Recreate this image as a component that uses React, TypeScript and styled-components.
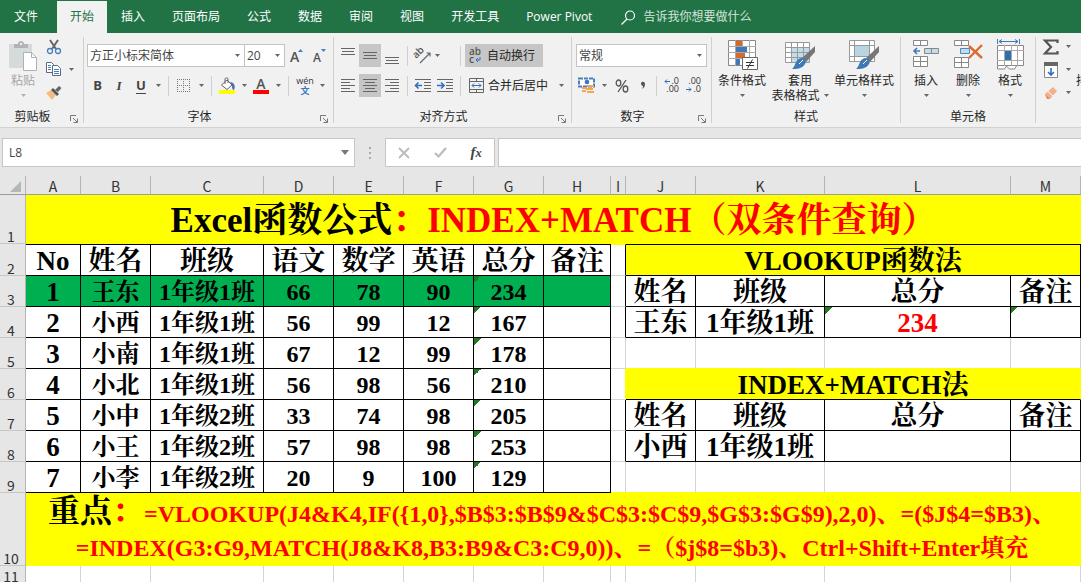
import React from "react";
import styled, { createGlobalStyle, css } from "styled-components";

const ui = `"Open Sans", "Noto Sans CJK SC", sans-serif`;
const uiCjk = `"Noto Sans CJK SC", sans-serif`;
const sheetFont = `"Liberation Serif", "Noto Serif CJK SC", "Noto Sans CJK SC", serif`;

const Global = createGlobalStyle`
  * { box-sizing: border-box; }
  html, body { margin: 0; background: #fff; }
  button, input, select { font: inherit; color: inherit; margin: 0; }
  svg { display: block; flex: none; overflow: visible; }
`;

const Window = styled.div`
  height: 100vh;
  overflow: hidden;
  display: flex;
  flex-direction: column;
  font: 12px/16px ${ui};
  color: #262626;
  background: #fff;
`;

/* ---------- tab strip ---------- */

const TabStrip = styled.nav`
  flex: none;
  display: flex;
  align-items: flex-end;
  gap: 1px;
  height: 33px;
  padding-left: 1px;
  background: #217346;
  overflow: hidden;
`;

const Tab = styled.button<{ $active?: boolean; $file?: boolean }>`
  flex: none;
  height: 32px;
  padding: 0 13px;
  border: 0;
  margin-right: ${(p) => (p.$file ? 5 : 0)}px;
  background: ${(p) => (p.$active ? "#f1f1f1" : "transparent")};
  color: ${(p) => (p.$active ? "#217346" : "#fff")};
  white-space: nowrap;
`;

const TellMe = styled.label`
  display: flex;
  align-items: center;
  gap: 7px;
  flex: 1;
  height: 32px;
  padding-left: 15px;
  color: #fff;

  input {
    flex: 1;
    min-width: 120px;
    padding: 0;
    border: 0;
    outline: 0;
    background: transparent;
  }
  input::placeholder { color: #d3e5da; opacity: 1; }
`;

/* ---------- ribbon ---------- */

const Ribbon = styled.div`
  flex: none;
  display: flex;
  height: 95px;
  padding: 2px 0;
  background: #f1f1f1;
  border-bottom: 1px solid #d2d2d2;
  overflow: hidden;
`;

const Group = styled.section<{ $w?: number }>`
  ${(p) => (p.$w ? css`flex: none; width: ${p.$w}px;` : css`flex: 1; min-width: 46px;`)}
  display: flex;
  flex-direction: column;
  padding-right: 1px;
  background: linear-gradient(#d0d0d0, #d0d0d0) right 2px / 1px 86px no-repeat;
  overflow: hidden;
  &:last-child { background: none; }
`;

const GroupBody = styled.div<{ $pad?: number }>`
  flex: 1;
  display: flex;
  padding-left: ${(p) => p.$pad ?? 3}px;
`;

const GroupFoot = styled.footer`
  display: flex;
  align-items: center;
  height: 17px;

  span { flex: 1; text-align: center; }
  button { padding: 4px 5px 0; border: 0; background: none; }
`;

const Rows = styled.div`
  display: flex;
  flex-direction: column;
  gap: 7px;
  padding-top: 9px;
`;

const Row = styled.div`
  display: flex;
  align-items: center;
  height: 23px;
`;

const Tool = styled.button<{ $w: number; $on?: boolean }>`
  flex: none;
  display: flex;
  align-items: center;
  justify-content: center;
  width: ${(p) => p.$w}px;
  height: 23px;
  padding: 0;
  border: 0;
  background: ${(p) => (p.$on ? "#c6c6c6" : "transparent")};
  color: #444;
`;

const TextTool = styled(Tool)`
  justify-content: flex-start;
  gap: 4px;
  padding-left: 4px;
  color: #262626;
  white-space: nowrap;
`;

const Glyph = styled.span<{ $size?: number; $italic?: boolean; $under?: boolean; $serif?: boolean }>`
  font: bold ${(p) => p.$size ?? 13}px/15px ${(p) => (p.$serif ? `"Liberation Serif", serif` : ui)};
  font-style: ${(p) => (p.$italic ? "italic" : "normal")};
  border-bottom: ${(p) => (p.$under ? "1px solid #444" : "0")};
`;

const Bar = styled.i<{ $before?: number }>`
  flex: none;
  width: 1px;
  height: 20px;
  margin: 0 4px 0 ${(p) => p.$before ?? 4}px;
  background: #d0d0d0;
`;

const Combo = styled.div<{ $w: number }>`
  position: relative;
  flex: none;
  width: ${(p) => p.$w}px;
  height: 23px;
  margin-right: -1px;
  border: 1px solid #c3c3c3;
  background: #fff;

  select {
    width: 100%;
    height: 21px;
    padding: 0 0 0 2px;
    border: 0;
    appearance: none;
    background: transparent;
    color: #444;
  }
  svg { position: absolute; right: 4px; top: 9px; pointer-events: none; }
`;

const Stack = styled.div`
  display: flex;
  flex-direction: column;
  width: 40px;
`;

const Big = styled.button<{ $w: number; $dim?: boolean }>`
  flex: none;
  display: flex;
  flex-direction: column;
  align-items: center;
  width: ${(p) => p.$w}px;
  padding: 5px 0 0;
  border: 0;
  background: none;
  color: ${(p) => (p.$dim ? "#a6a6a6" : "#262626")};
  line-height: 15px;
  white-space: nowrap;

  > svg:first-child { margin-bottom: 2px; }
  span { display: flex; align-items: center; justify-content: center; gap: 4px; min-height: 15px; }
`;

/* ---------- formula bar ---------- */

const FormulaBar = styled.div`
  flex: none;
  display: flex;
  align-items: center;
  height: 48px;
  padding: 10px 0 9px 2px;
  background: #e6e6e6;
`;

const NameBox = styled.div`
  position: relative;
  flex: none;
  width: 353px;
  height: 29px;
  border: 1px solid #c6c6c6;
  background: #fff;

  input { width: 100%; height: 27px; padding: 0 24px 0 6px; border: 0; outline: 0; background: none; color: #444; }
  button { position: absolute; right: 0; top: 0; width: 18px; height: 27px; padding: 0 5px; border: 0; background: none; }
`;

const Grip = styled.div`
  width: 30px;
  display: flex;
  justify-content: center;
`;

const EditButtons = styled.div`
  flex: none;
  display: flex;
  align-items: center;
  width: 110px;
  height: 29px;
  margin-right: 3px;
  border: 1px solid #c6c6c6;
  background: #fff;
`;

const FormulaInput = styled.input`
  flex: 1;
  min-width: 0;
  height: 29px;
  padding: 0 6px;
  border: 1px solid #c6c6c6;
  border-right: 0;
  outline: 0;
  background: #fff;
`;

/* ---------- worksheet ---------- */

const Sheet = styled.table`
  width: 100%;
  table-layout: fixed;
  border-collapse: separate;
  border-spacing: 0;
  font-family: ${sheetFont};
  color: #000;
`;

const ColHead = styled.th`
  height: 19px;
  padding: 3px 0 0;
  background: #e6e6e6;
  border-right: 1px solid #b4b4b4;
  border-bottom: 1px solid #9c9c9c;
  font: 400 14px/15px ${uiCjk};
  color: #333;
`;

const RowHead = styled.th<{ $h: number }>`
  height: ${(p) => p.$h}px;
  padding: 0 3px 0 0;
  vertical-align: bottom;
  background: #e6e6e6;
  border-right: 1px solid #b4b4b4;
  border-bottom: 1px solid #c6c6c6;
  font: 400 14px/14px ${uiCjk};
  color: #333;
`;

type Edge = "k" | "g" | "y";
const edge = { k: "#000", g: "#d4d4d4", y: "#ff0" };

const Cell = styled.td<{
  $size: number; $bg?: string; $r: Edge; $b: Edge; $t?: Edge; $red?: boolean; $flag?: boolean;
}>`
  padding: 2px 0 0;
  overflow: hidden;
  text-align: center;
  vertical-align: middle;
  white-space: nowrap;
  font-weight: bold;
  font-size: ${(p) => p.$size}px;
  line-height: 28px;
  color: ${(p) => (p.$red ? "#f00" : "#000")};
  background-color: ${(p) => p.$bg ?? "#fff"};
  border-right: 1px solid ${(p) => edge[p.$r]};
  border-bottom: 1px solid ${(p) => edge[p.$b]};
  ${(p) => p.$t && css`border-top: 1px solid ${edge[p.$t]};`}
  ${(p) => p.$flag && css`
    background-image: linear-gradient(135deg, #237a23 50%, transparent 50%);
    background-size: 7px 7px;
    background-repeat: no-repeat;
  `}
`;

const Banner = styled.td<{ $size: number; $line: number; $end?: number }>`
  padding: 2px ${(p) => p.$end ?? 0}px 0 0;
  text-align: center;
  vertical-align: middle;
  white-space: nowrap;
  background: #ff0;
  color: #f00;
  font-weight: bold;
  font-size: ${(p) => p.$size}px;
  line-height: ${(p) => p.$line}px;
`;

const Ink = styled.span<{ $size?: number; $black?: boolean }>`
  font-size: ${(p) => (p.$size ? p.$size + "px" : "inherit")};
  line-height: 28px;
  color: ${(p) => (p.$black ? "#000" : "inherit")};
`;

/* ---------- icons ---------- */

const Arrow = ({ c = "#666" }: { c?: string }) => (
  <svg width="5" height="3" viewBox="0 0 5 3"><path d="M0 0h5L2.5 3z" fill={c} /></svg>
);
const Launcher = () => (
  <svg width="8" height="8" viewBox="0 0 8 8" fill="none" stroke="#777"><path d="M.5 6V.5H6M3 3l4 4M7.500 3.500v4h-4" /></svg>
);
const Paste = () => (
  <svg width="30" height="31" viewBox="0 0 30 31">
    <path d="M1 4h23v24H1z" fill="#d5dada" />
    <path d="M6 8V4h4c0-4 6-4 6 0h4v4z" fill="#b3b3b3" /><path d="M12 3h2v2h-2z" fill="#f1f1f1" />
    <path d="M15.500 12.500h8l5 5v13h-13z" fill="#fff" stroke="#b0b0b0" /><path d="M23.500 12.500v5h5" fill="none" stroke="#b0b0b0" />
  </svg>
);
const Cut = () => (
  <svg width="16" height="16" viewBox="0 0 16 16" fill="none">
    <path d="M4 1l6 9M12 1L6 10" stroke="#666" strokeWidth="2" />
    <circle cx="4" cy="12" r="2.500" stroke="#4a7ebb" strokeWidth="1.300" /><circle cx="12" cy="12" r="2.500" stroke="#4a7ebb" strokeWidth="1.300" />
  </svg>
);
const Copy = () => (
  <svg width="16" height="15" viewBox="0 0 16 15" fill="#fff" stroke="#5a6b80">
    <path d="M.5.5h5l2 2v8h-7z" /><path d="M6.500 3.500h5l3 3v7h-8z" />
    <path d="M2 3.500h3M2 5.500h3M2 7.500h3M8 7.500h5M8 9.500h5M8 11.500h5" stroke="#4a7ebb" />
  </svg>
);
const Brush = () => (
  <svg width="16" height="15" viewBox="0 0 16 15">
    <path d="M0 8l5-3 5 5-4 5z" fill="#f3bd80" /><path d="M5 5l2-2 6 6-2 2z" fill="#555" /><path d="M9 5l4-4 2.500 2L12 7z" fill="#666" />
  </svg>
);
const SizeA = ({ up }: { up?: boolean }) => (
  <svg width="14" height="16" viewBox="0 0 14 16">
    <text x="0" y="14" fontFamily="Open Sans" fontWeight="600" fontSize={up ? 14 : 12} fill="#555">A</text>
    <path d={up ? "M8 4h5l-2.500-3z" : "M8 1h5l-2.500 3z"} fill="#4a7ebb" />
  </svg>
);
const Borders = () => (
  <svg width="14" height="14" viewBox="0 0 14 14" stroke="#777" fill="none">
    <path d="M.5 0v13M6.500 0v13M12.500 0v13M0 .5h13M0 6.500h13M0 12.500h13" strokeDasharray="1 1" />
  </svg>
);
const Fill = () => (
  <svg width="17" height="16" viewBox="0 0 17 16">
    <path d="M2.500 7l5.500-5 5 5-5 4.500z" fill="#fff" stroke="#666" /><path d="M6 6V1c0-1.500 3-1.500 3 0v4" fill="none" stroke="#666" />
    <path d="M11 4c4 0 6 4 4 8-2 0-2-3-2-5z" fill="#4a6fb5" /><path d="M0 12h16v4H0z" fill="#ff0" />
  </svg>
);
const FontColor = () => (
  <svg width="16" height="16" viewBox="0 0 16 16">
    <text x="8" y="11" textAnchor="middle" fontFamily="Open Sans" fontWeight="600" fontSize="14" fill="#555">A</text>
    <path d="M0 12h16v4H0z" fill="#f00" />
  </svg>
);
const Phonetic = () => (
  <svg width="18" height="18" viewBox="0 0 18 18">
    <text x="9" y="7" textAnchor="middle" fontFamily="Open Sans" fontSize="9" fill="#333">wén</text>
    <text x="9" y="17" textAnchor="middle" fontFamily="Noto Sans CJK SC" fontWeight="bold" fontSize="9" fill="#3c78c0">文</text>
  </svg>
);
const Lines = ({ w, y, align = 0 }: { w: number[]; y: number; align?: number }) => (
  <svg width="15" height="18" viewBox="0 0 15 18" stroke="#666">
    <path d={w.map((n, i) => `M${Math.round(((14 - n) * align) / 2)} ${y + i * 3 + 0.5}h${n}`).join("")} />
  </svg>
);
const Orient = () => (
  <svg width="18" height="17" viewBox="0 0 18 17">
    <text transform="rotate(-45 5 12)" x="3" y="10" fontFamily="Open Sans" fontWeight="600" fontSize="10" fill="#555">ab</text>
    <path d="M6 16L16 6M12.500 6H16v3.500" fill="none" stroke="#666" strokeWidth="1.200" />
  </svg>
);
const Indent = ({ right }: { right?: boolean }) => (
  <svg width="17" height="13" viewBox="0 0 17 13" fill="none">
    <path d="M0 .5h16M9 3.500h7M9 6.500h7M9 9.500h7M0 12.500h16" stroke="#666" />
    <path d={right ? "M0 6.500h7M4 3.500l3 3-3 3" : "M0 6.500h7M3.500 3.500l-3 3 3 3"} stroke="#2f6fc0" strokeWidth="1.600" />
  </svg>
);
const Wrap = () => (
  <svg width="14" height="18" viewBox="0 0 14 18">
    <text x="0" y="8" fontFamily="Open Sans" fontWeight="600" fontSize="10" fill="#555">ab</text>
    <text x="0" y="16" fontFamily="Open Sans" fontWeight="600" fontSize="10" fill="#555">c</text>
    <path d="M11 10v3H7M9 11l-2 2 2 2" fill="none" stroke="#2f6fc0" />
  </svg>
);
const Merge = () => (
  <svg width="15" height="15" viewBox="0 0 15 15" fill="none" stroke="#666">
    <path d="M.5.5h14v14H.5zM.5 3.500h14M.5 11.500h14M7.500 0v3.500M7.500 11.500V15" />
    <path d="M3 7.500h9M5 5.500l-2 2 2 2M10 5.500l2 2-2 2" stroke="#2f6fc0" />
  </svg>
);
const Currency = () => (
  <svg width="18" height="17" viewBox="0 0 18 17">
    <path d="M1 1.500h15v8H1z" fill="#fff" stroke="#4a7ebb" strokeWidth="2" strokeDasharray="4 1" /><circle cx="9" cy="5" r="2.300" fill="#3c78c0" />
    <path d="M9 8h7v2H9zM8 11h7v2H8zM4 10h4v2H4zM4 13h4v2H4zM9 14h7v2H9z" fill="#f0a850" />
  </svg>
);
const Decimal = ({ less }: { less?: boolean }) => (
  <svg width="16" height="17" viewBox="0 0 16 17">
    <g fontFamily="Open Sans" fontSize="9" fill="#333" textAnchor="end">
      <text x="15" y="7">{less ? ".00" : ".0"}</text><text x="15" y="15">{less ? ".0" : ".00"}</text>
    </g>
    <path d={less ? "M0 12.500h5M3 10.500l2 2-2 2" : "M1 4.500h5M3 2.500l-2 2 2 2"} fill="none" stroke="#2f6fc0" />
  </svg>
);
const CondFormat = () => (
  <svg width="31" height="31" viewBox="0 0 31 31">
    <path d="M1.500.5h27v25h-27z" fill="#fff" stroke="#888" /><path d="M1 6.500h28M1 12.500h28M1 18.500h28M8.500 0v26M15.500 0v26M22.500 0v26" stroke="#aaa" />
    <path d="M9 1h6v5H9zM9 13h9v5H9z" fill="#d9692a" /><path d="M9 7h11v5H9zM9 19h4v6H9z" fill="#3f79b7" />
    <path d="M15.500 17.500h15v12h-15z" fill="#fff" stroke="#666" /><path d="M19 22.500h8M19 25.500h8M25.500 19.500l-5 9" stroke="#333" />
  </svg>
);
const Painter = () => (
  <>
    <path d="M30 6v6l-9 10-4-4z" fill="#777" /><path d="M16 18c4 0 6 3 4 6-3 5-9 5-13 5 4-3 3-10 9-11z" fill="#3f79b7" />
    <path d="M14 24l4-4" stroke="#fff" />
  </>
);
const TableFormat = () => (
  <svg width="31" height="31" viewBox="0 0 31 31">
    <path d="M.5 2.500h24v20H.5z" fill="#fff" /><path d="M7 8h18v15H7z" fill="#c3dcea" />
    <path d="M.5 2.500h24v20H.5zM0 7.500h25M0 12.500h25M0 17.500h25M6.500 2v21M12.500 2v21M18.500 2v21" fill="none" stroke="#999" />
    <Painter />
  </svg>
);
const CellStyle = () => (
  <svg width="31" height="31" viewBox="0 0 31 31">
    <path d="M.5.5h25v21H.5z" fill="#fff" /><path d="M6 6h14v10H6z" fill="#b9d5e4" />
    <path d="M.5.5h25v21H.5zM0 5.500h26M0 16.500h26M5.500 0v22M20.500 0v22" fill="none" stroke="#999" />
    <Painter />
  </svg>
);
const InsertCell = () => (
  <svg width="28" height="31" viewBox="0 0 28 31" fill="#fff" stroke="#888">
    <path d="M1.500.5h14v5h-14zM8.500.5v5M1.500 16.500h14v10h-14zM8.500 16.500v10M1 21.500h14" />
    <path d="M12.500 8.500h14v5h-14zM19.500 8.500v5" fill="#c3dcea" />
    <path d="M2 11h6M5 8l-3 3 3 3" fill="none" stroke="#3f79b7" strokeWidth="1.600" />
  </svg>
);
const DeleteCell = () => (
  <svg width="30" height="31" viewBox="0 0 30 31" fill="#fff" stroke="#888">
    <path d="M1.500.5h14v5h-14zM8.500.5v5M1.500 17.500h14v10h-14zM8.500 17.500v10M1 22.500h14" /><path d="M7.500 8.500h9v5h-9z" fill="#c3dcea" stroke="#4f88b8" />
    <path d="M16 6l13 12M29 5L16 18" stroke="#dd6b32" strokeWidth="2.400" />
  </svg>
);
const FormatCell = () => (
  <svg width="29" height="31" viewBox="0 0 29 31" fill="none">
    <path d="M1.500-1v5M23.500-1v5M3 1.500h19M6-.5l-3 2 3 2M19-.5l3 2-3 2" stroke="#3f79b7" />
    <path d="M1.500 5.500h26v20h-26z" fill="#fff" stroke="#888" /><path d="M1 10.500h27M1 20.500h27M8.500 5v21M15.500 5v21M21.500 5v21" stroke="#aaa" />
    <path d="M9 11h6v9H9z" fill="#2f6fae" /><path d="M1.500 26v3h7l2-3 3 3h5l2-3" fill="#fff" stroke="#888" />
  </svg>
);
const Sigma = () => (
  <svg width="16" height="16" viewBox="0 0 16 16"><path d="M14.500 4V1.500H2L8 8l-6 6.500h12.500V12" fill="none" stroke="#555" strokeWidth="2.200" /></svg>
);
const FillDown = () => (
  <svg width="15" height="16" viewBox="0 0 15 16"><path d="M.5.5h13v15H.5z" fill="#fff" stroke="#888" /><path d="M0 0h14v4H0z" fill="#666" /><path d="M7 6v7M4 10l3 3 3-3" fill="none" stroke="#2f6fc0" strokeWidth="1.600" /></svg>
);
const Eraser = () => (
  <svg width="15" height="15" viewBox="0 0 15 15"><path d="M1 9l8-7 4 4-7 8H3z" fill="#f2b08c" /><path d="M1 9l5 5H3z" fill="#e08a60" /><path d="M4 6.500l5 4.500" stroke="#fff" /></svg>
);
const Search = () => (
  <svg width="15" height="15" viewBox="0 0 15 15" fill="none" stroke="#fff" strokeWidth="1.200"><circle cx="9" cy="5.500" r="4.500" /><path d="M6 9l-5.500 5.500" /></svg>
);

/* ---------- worksheet data ---------- */

const columns: [string, number][] = [
  ["A", 55], ["B", 70], ["C", 113], ["D", 70], ["E", 70], ["F", 70], ["G", 70],
  ["H", 67], ["I", 15], ["J", 70], ["K", 129], ["L", 186], ["M", 70],
];

const scores = [
  ["No", "姓名", "班级", "语文", "数学", "英语", "总分", "备注"],
  ["1", "王东", "1年级1班", "66", "78", "90", "234", ""],
  ["2", "小西", "1年级1班", "56", "99", "12", "167", ""],
  ["3", "小南", "1年级1班", "67", "12", "99", "178", ""],
  ["4", "小北", "1年级1班", "56", "98", "56", "210", ""],
  ["5", "小中", "1年级2班", "33", "74", "98", "205", ""],
  ["6", "小王", "1年级2班", "57", "98", "98", "253", ""],
  ["7", "小李", "1年级2班", "20", "9", "100", "129", ""],
];

type Side = { title?: string; cells?: string[]; last?: Edge };
const lookups: Side[] = [
  { title: "VLOOKUP函数法" },
  { cells: ["姓名", "班级", "总分", "备注"] },
  { cells: ["王东", "1年级1班", "234", ""] },
  { last: "y" },
  { title: "INDEX+MATCH法" },
  { cells: ["姓名", "班级", "总分", "备注"] },
  { cells: ["小西", "1年级1班", "", ""] },
  { last: "y" },
];

function SheetRow({ i }: { i: number }) {
  const top = i === 0;
  const side = lookups[i];
  const gapEdge: Edge = i === 4 ? "y" : side.last ? "g" : "k";
  return (
    <tr>
      <RowHead scope="row" $h={top ? 32 : 31}>{i + 2}</RowHead>
      {scores[i].map((v, c) => (
        <Cell key={c} $size={top || c === 0 ? 27 : 24} $r="k" $b="k" $t={top ? "k" : undefined}
          $bg={i === 1 ? "#00b050" : undefined} $flag={c === 6 && !top}>{v}</Cell>
      ))}
      <Cell $size={24} $r={gapEdge} $b={i === 7 ? "y" : "g"} $t={top ? "y" : undefined} />
      {side.title && (
        <Cell colSpan={4} $size={27} $bg="#ff0" $r={top ? "k" : "y"} $b="k" $t={top ? "k" : undefined}>{side.title}</Cell>
      )}
      {side.cells?.map((v, c) => (
        <Cell key={c} $size={27} $r="k" $b="k" $red={v === "234"} $flag={i === 2 && c > 1}>{v}</Cell>
      ))}
      {side.last && [0, 1, 2, 3].map((c) => <Cell key={c} $size={24} $r="g" $b="y" />)}
    </tr>
  );
}

const tabs = ["插入", "页面布局", "公式", "数据", "审阅", "视图", "开发工具", "Power Pivot"];

const Foot = ({ label, launch = true }: { label: string; launch?: boolean }) => (
  <GroupFoot><span>{label}</span>{launch && <button aria-label={label + "设置"}><Launcher /></button>}</GroupFoot>
);

export default function App() {
  return (
    <Window>
      <Global />
      <TabStrip>
        <Tab $file>文件</Tab>
        <Tab $active>开始</Tab>
        {tabs.map((t) => <Tab key={t}>{t}</Tab>)}
        <TellMe><Search /><input aria-label="告诉我你想要做什么" placeholder="告诉我你想要做什么" /></TellMe>
      </TabStrip>

      <Ribbon>
        <Group $w={84}>
          <GroupBody $pad={4}>
            <Big $w={38} $dim><Paste /><span>粘贴</span><span><Arrow c="#b0b0b0" /></span></Big>
            <Stack>
              <Tool $w={24} aria-label="剪切"><Cut /></Tool>
              <Row>
                <Tool $w={24} aria-label="复制"><Copy /></Tool>
                <Tool $w={10} aria-label="复制选项"><Arrow /></Tool>
              </Row>
              <Tool $w={24} aria-label="格式刷"><Brush /></Tool>
            </Stack>
          </GroupBody>
          <Foot label="剪贴板" />
        </Group>

        <Group $w={250}>
          <GroupBody>
            <Rows>
              <Row>
                <Combo $w={158}><select aria-label="字体"><option>方正小标宋简体</option></select><Arrow /></Combo>
                <Combo $w={41}><select aria-label="字号"><option>20</option></select><Arrow /></Combo>
                <Tool $w={26} aria-label="增大字号"><SizeA up /></Tool>
                <Tool $w={20} aria-label="减小字号"><SizeA /></Tool>
              </Row>
              <Row>
                <Tool $w={21} aria-label="加粗"><Glyph>B</Glyph></Tool>
                <Tool $w={22} aria-label="倾斜"><Glyph $italic $serif>I</Glyph></Tool>
                <Tool $w={22} aria-label="下划线"><Glyph $under>U</Glyph></Tool>
                <Tool $w={12} aria-label="下划线选项"><Arrow /></Tool>
                <Bar />
                <Tool $w={22} aria-label="边框"><Borders /></Tool>
                <Tool $w={12} aria-label="边框选项"><Arrow /></Tool>
                <Bar />
                <Tool $w={22} aria-label="填充颜色"><Fill /></Tool>
                <Tool $w={12} aria-label="填充颜色选项"><Arrow /></Tool>
                <Tool $w={22} aria-label="字体颜色"><FontColor /></Tool>
                <Tool $w={12} aria-label="字体颜色选项"><Arrow /></Tool>
                <Bar />
                <Tool $w={24} aria-label="拼音"><Phonetic /></Tool>
                <Tool $w={10} aria-label="拼音选项"><Arrow /></Tool>
              </Row>
            </Rows>
          </GroupBody>
          <Foot label="字体" />
        </Group>

        <Group $w={238}>
          <GroupBody>
            <Rows>
              <Row>
                <Tool $w={22} aria-label="顶端对齐"><Lines w={[14, 12, 14]} y={1} align={1} /></Tool>
                <Tool $w={22} $on aria-label="垂直居中"><Lines w={[14, 12, 14]} y={5} align={1} /></Tool>
                <Tool $w={22} aria-label="底端对齐"><Lines w={[14, 12, 14]} y={10} align={1} /></Tool>
                <Bar />
                <Tool $w={22} aria-label="方向"><Orient /></Tool>
                <Tool $w={6} aria-label="方向选项"><Arrow /></Tool>
                <Bar $before={20} />
                <TextTool $w={78} $on><Wrap />自动换行</TextTool>
              </Row>
              <Row>
                <Tool $w={22} aria-label="左对齐"><Lines w={[14, 9, 14, 9, 14]} y={2} /></Tool>
                <Tool $w={22} $on aria-label="居中"><Lines w={[14, 10, 14, 10, 14]} y={2} align={1} /></Tool>
                <Tool $w={22} aria-label="右对齐"><Lines w={[14, 9, 14, 9, 14]} y={2} align={2} /></Tool>
                <Bar />
                <Tool $w={22} aria-label="减少缩进量"><Indent /></Tool>
                <Tool $w={22} aria-label="增加缩进量"><Indent right /></Tool>
                <Bar />
                <TextTool $w={90}><Merge />合并后居中</TextTool>
                <Tool $w={12} aria-label="合并选项"><Arrow /></Tool>
              </Row>
            </Rows>
          </GroupBody>
          <Foot label="对齐方式" />
        </Group>

        <Group $w={140}>
          <GroupBody $pad={4}>
            <Rows>
              <Row><Combo $w={131}><select aria-label="数字格式"><option>常规</option></select><Arrow /></Combo></Row>
              <Row>
                <Tool $w={22} aria-label="会计数字格式"><Currency /></Tool>
                <Tool $w={12} aria-label="会计数字格式选项"><Arrow /></Tool>
                <Tool $w={24} aria-label="百分比样式">
                  <svg width="14" height="14" viewBox="0 0 14 14" fill="none" stroke="#555" strokeWidth="1.300">
                    <ellipse cx="3.500" cy="4" rx="2.300" ry="3" /><ellipse cx="10.500" cy="10" rx="2.300" ry="3" /><path d="M11 1L3 13" />
                  </svg>
                </Tool>
                <Tool $w={18} aria-label="千位分隔样式">
                  <svg width="6" height="10" viewBox="0 0 6 10"><path d="M1 2.500C1 0 5 0 5 3c0 2-1 4-3 5 1-2 1-3 1-3-1 0-2-1-2-2.500z" fill="#555" /></svg>
                </Tool>
                <Bar />
                <Tool $w={22} aria-label="增加小数位数"><Decimal /></Tool>
                <Tool $w={22} aria-label="减少小数位数"><Decimal less /></Tool>
              </Row>
            </Rows>
          </GroupBody>
          <Foot label="数字" />
        </Group>

        <Group $w={189}>
          <GroupBody>
            <Big $w={54}><CondFormat /><span>条件格式</span><span><Arrow /></span></Big>
            <Big $w={62}><TableFormat /><span>套用</span><span>表格格式<Arrow /></span></Big>
            <Big $w={66}><CellStyle /><span>单元格样式</span><span><Arrow /></span></Big>
          </GroupBody>
          <Foot label="样式" launch={false} />
        </Group>

        <Group $w={135}>
          <GroupBody $pad={4}>
            <Big $w={42}><InsertCell /><span>插入</span><span><Arrow /></span></Big>
            <Big $w={42}><DeleteCell /><span>删除</span><span><Arrow /></span></Big>
            <Big $w={42}><FormatCell /><span>格式</span><span><Arrow /></span></Big>
          </GroupBody>
          <Foot label="单元格" launch={false} />
        </Group>

        <Group>
          <GroupBody>
            <Stack>
              <Row><Tool $w={24} aria-label="自动求和"><Sigma /></Tool><Tool $w={10} aria-label="求和选项"><Arrow /></Tool></Row>
              <Row><Tool $w={24} aria-label="填充"><FillDown /></Tool><Tool $w={10} aria-label="填充选项"><Arrow /></Tool></Row>
              <Row><Tool $w={24} aria-label="清除"><Eraser /></Tool><Tool $w={10} aria-label="清除选项"><Arrow /></Tool></Row>
            </Stack>
            <Big $w={66}><svg width="30" height="31" /><span>排序和筛选</span></Big>
          </GroupBody>
        </Group>
      </Ribbon>

      <FormulaBar>
        <NameBox>
          <input aria-label="名称框" defaultValue="L8" />
          <button aria-label="名称列表"><svg width="8" height="5" viewBox="0 0 8 5"><path d="M0 0h8L4 5z" fill="#777" /></svg></button>
        </NameBox>
        <Grip><svg width="2" height="12" viewBox="0 0 2 12" fill="#aaa"><path d="M0 0h2v2H0zM0 5h2v2H0zM0 10h2v2H0z" /></svg></Grip>
        <EditButtons>
          <Tool $w={36} aria-label="取消"><svg width="12" height="12" viewBox="0 0 12 12" stroke="#bbb" strokeWidth="1.800"><path d="M1 1l10 10M11 1L1 11" /></svg></Tool>
          <Tool $w={36} aria-label="输入"><svg width="13" height="11" viewBox="0 0 13 11" fill="none" stroke="#bbb" strokeWidth="2.200"><path d="M1 6l3.500 3.500L12 1" /></svg></Tool>
          <Tool $w={36} aria-label="插入函数"><Glyph $size={15} $italic $serif>f<small>x</small></Glyph></Tool>
        </EditButtons>
        <FormulaInput aria-label="编辑栏" />
      </FormulaBar>

      <Sheet>
        <colgroup>
          <col style={{ width: 26 }} />
          {columns.map(([n, w]) => <col key={n} style={{ width: w }} />)}
        </colgroup>
        <thead>
          <tr>
            <ColHead aria-label="全选"><svg width="22" height="12" viewBox="0 0 22 12"><path d="M21 0v11H10z" fill="#b2b8b4" /></svg></ColHead>
            {columns.map(([n]) => <ColHead key={n} scope="col">{n}</ColHead>)}
          </tr>
        </thead>
        <tbody>
          <tr>
            <RowHead scope="row" $h={49}>1</RowHead>
            <Banner colSpan={13} $size={35} $line={46}><Ink $black>Excel函数公式</Ink>：INDEX+MATCH（双条件查询）</Banner>
          </tr>
          {scores.map((_, i) => <SheetRow key={i} i={i} />)}
          <tr>
            <RowHead scope="row" $h={73}>10</RowHead>
            <Banner colSpan={13} $size={24} $line={34} $end={3}>
              <Ink $size={32} $black>重点</Ink><Ink $size={32}>：</Ink>=VLOOKUP(J4&amp;K4,IF({"{1,0}"},$B$3:$B$9&amp;$C$3:$C$9,$G$3:$G$9),2,0)、=($J$4=$B3)、
              <br />
              =INDEX(G3:G9,MATCH(J8&amp;K8,B3:B9&amp;C3:C9,0))、=（$j$8=$b3)、Ctrl+Shift+Enter填充
            </Banner>
          </tr>
          <tr>
            <RowHead scope="row" $h={18}>11</RowHead>
            {columns.map(([n]) => <Cell key={n} $size={12} $r="g" $b="g" />)}
          </tr>
        </tbody>
      </Sheet>
    </Window>
  );
}
